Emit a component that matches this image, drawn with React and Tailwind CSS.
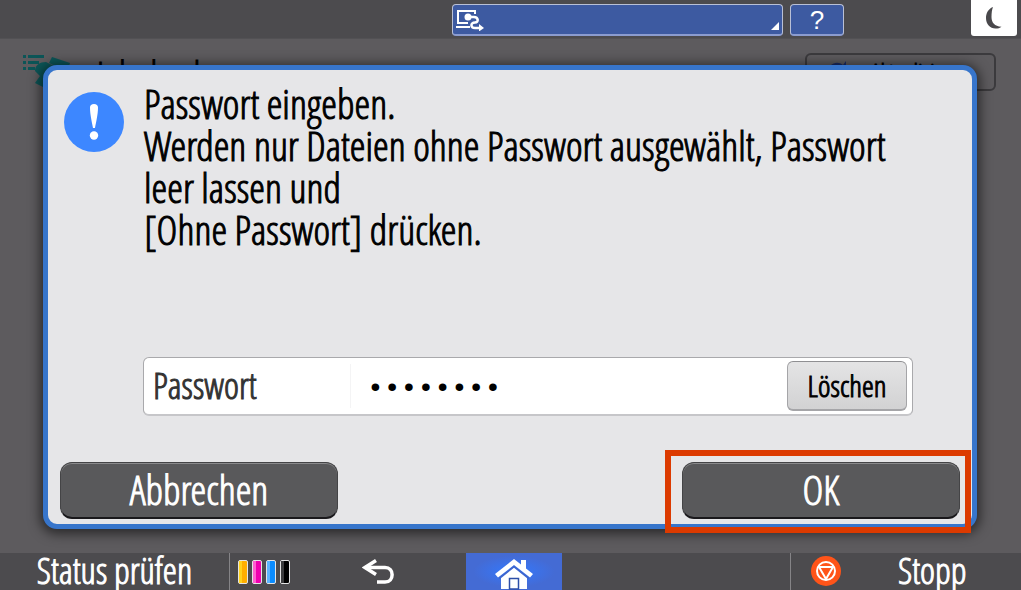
const TONERS = [
  { name: "Gelb", color: "bg-[#ffae00]", shine: "bg-[#ffd21f]" },
  { name: "Magenta", color: "bg-[#f000b0]", shine: "bg-[#ff5fd0]" },
  { name: "Cyan", color: "bg-[#0a8cff]", shine: "bg-[#5cb4ff]" },
  { name: "Schwarz", color: "bg-black", shine: "bg-[#3c3c3e]" },
];

export default function App() {
  return (
    <div className="flex h-screen w-full flex-col overflow-hidden bg-[#5d5b5e] font-['Open_Sans_Condensed_Light','Open_Sans',sans-serif] [-webkit-text-stroke:1px]">
      <TopBar />
      <main className="relative flex-1">
        <JobScreen />
        <PasswordDialog />
      </main>
      <BottomBar />
    </div>
  );
}

function TopBar() {
  return (
    <header className="flex h-[39px] items-start justify-end border-b border-[#525154] bg-[#4c4b4e] pr-1">
      <button
        aria-label="Anmelden"
        className="relative mt-1 mr-[7px] flex h-8 w-[331px] items-center rounded border border-b-2 border-[#b9c0d6] border-b-[#8b9cd0] bg-[#3d5aa1] pl-[3px]"
      >
        <LoginIcon />
        <svg className="absolute right-[3px] bottom-1 h-2 w-2" viewBox="0 0 8 8">
          <path d="M8 0v8H0z" fill="#fff" />
        </svg>
      </button>
      <button
        aria-label="Hilfe"
        className="mt-1 mr-[127px] h-8 w-[54px] rounded border border-b-2 border-[#b9c0d6] border-b-[#8b9cd0] bg-[#3d5aa1] font-['Liberation_Sans',sans-serif] text-[26px] leading-7 text-white [-webkit-text-stroke:0]"
      >
        ?
      </button>
      <button
        aria-label="Energiesparen"
        className="flex h-9 w-[46px] items-center justify-center rounded-b-[3px] bg-white"
      >
        <svg className="h-6 w-4" viewBox="0 0 16 24">
          <path d="M7 1C2 3 0 7.500 0 12c0 6 4 10.500 9.500 10.500 2.500 0 4.500-.5 6-1.800C8.500 20.500 5.500 16.500 5.500 11 5.500 6.500 6 3.500 7 1z" fill="#49484b" />
        </svg>
      </button>
    </header>
  );
}

function JobScreen() {
  return (
    <div className="flex items-start justify-between pt-[14px] pr-[25px] pl-[23px]">
      <div className="flex items-start">
        <JobIcon />
        <h1 className="ml-6 pt-1 text-[36px] leading-9 text-black">Job drucken</h1>
      </div>
      <button className="flex h-[38px] w-[191px] items-center rounded-md border-2 border-[#3b3a3d] pl-5 text-[24px] leading-7 text-black">
        <svg className="mr-6 h-6 w-5" viewBox="0 0 20 24">
          <path d="M1 12C1 4 10 0 16 5l3-4v9h-9l3-3C9 4 4 7 4 12z" fill="#1b2d68" />
          <path d="M19 12c0 8-9 12-15 7l-3 4v-9h9l-3 3c4 3 9 0 9-5z" fill="#1b2d68" />
        </svg>
        Aktualisieren
      </button>
    </div>
  );
}

function PasswordDialog() {
  return (
    <section
      role="dialog"
      aria-labelledby="dialog-text"
      className="absolute inset-x-11 top-[26px] bottom-6 -ml-px flex flex-col rounded-[14px] border-[5px] border-[#3775cb] bg-[#e6e6e8] shadow-[0_2px_12px_3px_rgba(0,0,0,0.55)]"
    >
      <div className="flex gap-5 pl-4">
        <svg className="mt-[22px] h-[60px] w-[60px] shrink-0" viewBox="0 0 60 60">
          <circle cx="30" cy="30" r="30" fill="#3d87ff" />
          <path d="M26 15.500c0-2 1.500-3.500 4-3.500s4 1.500 4 3.500c0 7-2 15-3 20.500h-2c-1-5.500-3-13.500-3-20.500z" fill="#fff" />
          <circle cx="30" cy="43.500" r="4.200" fill="#fff" />
        </svg>
        <p id="dialog-text" className="mr-[59px] flex-1 pt-[13px] text-[40px] leading-[42px] text-black">
          Passwort eingeben.
          <br />
          Werden nur Dateien ohne Passwort ausgewählt, Passwort leer lassen und
          <br />
          [Ohne Passwort] drücken.
        </p>
      </div>

      <form className="mt-auto mr-[59px] mb-[46px] ml-[95px] flex h-[59px] items-center rounded-md border border-b-2 border-[#a9a9ac] border-b-[#c6c6c9] bg-white pr-[5px]">
        <label
          htmlFor="password"
          className="w-[207px] border-r border-[#f4f4f5] pl-[9px] text-[36px] leading-[44px] text-[#333]"
        >
          Passwort
        </label>
        <input
          id="password"
          type="password"
          defaultValue="12345678"
          className="h-12 min-w-0 flex-1 bg-transparent pt-1 pl-4 font-['Liberation_Mono',monospace] text-[28px] text-black outline-none [-webkit-text-stroke:0]"
        />
        <button
          type="reset"
          className="h-[50px] w-[120px] rounded-md border border-b-2 border-[#a5a5a8] border-t-[#8f8f92] bg-linear-to-b from-[#e4e4e5] to-[#d2d2d3] text-[30px] leading-9 text-black"
        >
          Löschen
        </button>
      </form>

      <div className="flex justify-between px-3 pb-[5px]">
        <DialogButton>Abbrechen</DialogButton>
        <div className="relative">
          <DialogButton>OK</DialogButton>
          <div className="pointer-events-none absolute -top-3 -right-[11px] -bottom-[14px] -left-[17px] border-[6px] border-[#dc3a00]" />
        </div>
      </div>
    </section>
  );
}

function DialogButton({ children }) {
  return (
    <button className="block h-[57px] w-[278px] rounded-xl border border-b-2 border-[#444446] border-b-[#1a191c] bg-[#59595b] text-[40px] leading-[54px] text-white shadow-[inset_0_1px_0_#8a8a8c]">
      {children}
    </button>
  );
}

function BottomBar() {
  return (
    <footer className="grid h-[37px] grid-cols-[230px_236px_96px_1fr_230px] bg-[#4c4b4e] text-white">
      <button className="border-r border-[#858487] pb-0.5 text-[36px] leading-8">Status prüfen</button>
      <div className="flex items-center">
        <ul className="ml-2 flex gap-1">
          {TONERS.map((t) => (
            <li
              key={t.name}
              aria-label={t.name}
              className={`flex h-6 w-[10px] rounded-xs border border-[#e4e4e4] ${t.color}`}
            >
              <span className={`w-[3px] ${t.shine}`} />
            </li>
          ))}
        </ul>
        <button aria-label="Zurück" className="ml-[72px]">
          <BackIcon />
        </button>
      </div>
      <button
        aria-label="Startseite"
        className="flex items-end justify-center bg-[#446bd4] bg-radial from-[#2f78ff] to-[#446bd4] to-60%"
      >
        <HomeIcon />
      </button>
      <span className="border-r border-[#858487]" />
      <button className="flex items-center pb-0.5 pl-5 text-[36px] leading-8">
        <StopIcon />
        <span className="ml-[57px]">Stopp</span>
      </button>
    </footer>
  );
}

function LoginIcon() {
  return (
    <svg className="h-[22px] w-7" viewBox="0 0 28 22" fill="none" stroke="#fff" strokeWidth="2">
      <path d="M19 5V2H2v12h10M0 18h14" />
      <path d="M11 8h7c4.500 0 5 5.500 1 5.500-5 0-4.500 5.500 0 5.500h4" strokeWidth="2.500" />
      <circle cx="12" cy="8" r="3.500" fill="#fff" stroke="none" />
      <path d="M23 15l5 4-5 3.500z" fill="#fff" stroke="none" />
    </svg>
  );
}

function JobIcon() {
  return (
    <svg className="mt-0.5 h-9 w-[50px]" viewBox="0 0 50 36" fill="#0c5557">
      <path d="M0 0h3v3H0zM5 0h16v3H5zM0 6h3v3H0zM5 6h11v3H5zM0 12h3v3H0zM5 12h7v3H5z" />
      <path d="M12 16c0-6 5-9 11-9l8 4 14 5v16H20l-8-4 5-7z" />
      <path d="M29 2l18 6-3 9-18-9z" />
    </svg>
  );
}

function BackIcon() {
  return (
    <svg className="h-[26px] w-8" viewBox="0 0 32 26" fill="none" stroke="#fff" strokeWidth="3.500">
      <path d="M3 8.500h20c9.500 0 9.500 14.500 0 14.500h-8" />
      <path d="M14 1.500L3 8.500l11 7" />
    </svg>
  );
}

function HomeIcon() {
  return (
    <svg className="h-8 w-[38px]" viewBox="0 0 38 32">
      <path d="M19 9L6 19v12h26V19z" fill="#fff" />
      <path d="M4 20.500L19 8.500l15 12" fill="none" stroke="#3d66cf" strokeWidth="2" />
      <path d="M26 2h5v10l-5-4z" fill="#fff" />
      <path d="M19 1L0 16l3 3.500L19 7l16 12.500 3-3.500z" fill="#fff" />
      <path d="M14.500 20.500h9V31h-9z" fill="#fff" stroke="#2d4fa8" strokeWidth="1.500" />
    </svg>
  );
}

function StopIcon() {
  return (
    <svg className="h-[30px] w-[30px]" viewBox="0 0 30 30" fill="none">
      <circle cx="15" cy="15" r="15" fill="#ff5419" />
      <circle cx="15" cy="15" r="9" stroke="#fff" strokeWidth="2" />
      <path d="M8 11h14l-7 12z" stroke="#fff" strokeWidth="2" strokeLinejoin="round" />
    </svg>
  );
}
